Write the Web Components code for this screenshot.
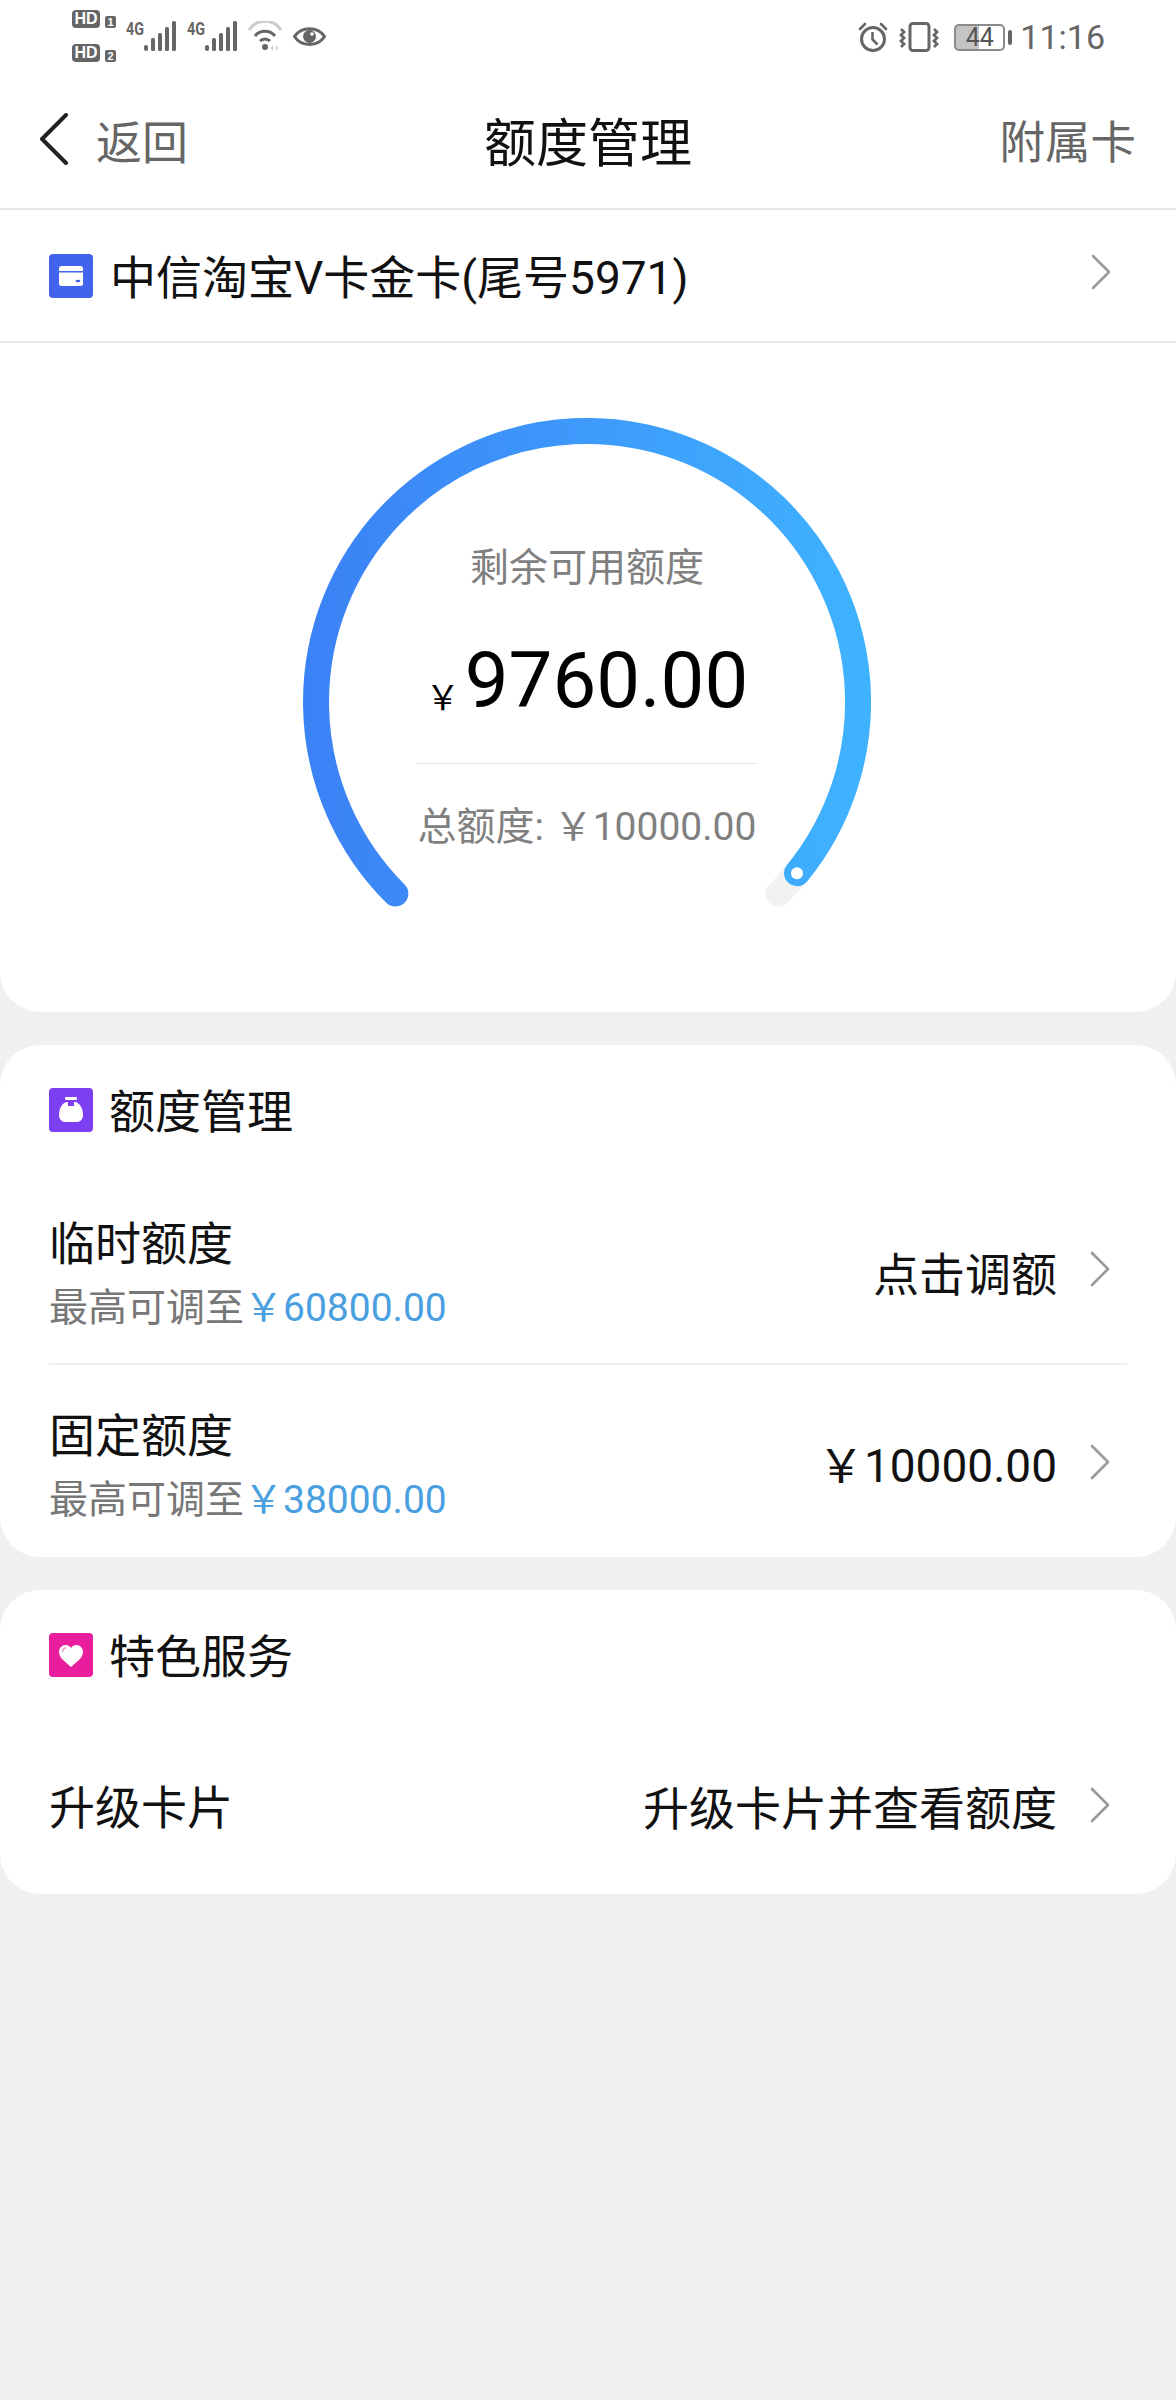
<!DOCTYPE html>
<html lang="zh">
<head>
<meta charset="utf-8">
<title>额度管理</title>
<style>
	html, body { margin: 0; background: #f0f0f0; }
	body { font-family: Roboto, "Noto Sans CJK SC", sans-serif; min-height: 2400px; }
</style>
</head>
<body>
	<status-bar></status-bar>
	<nav-bar back="返回" title="额度管理" action="附属卡"></nav-bar>
	<card-picker>中信淘宝V卡金卡(尾号5971)</card-picker>
	<quota-gauge></quota-gauge>

	<panel-card title="额度管理" style="margin-top:33px">
		<tile-icon slot="icon" kind="bag"></tile-icon>
		<panel-row name="临时额度" hint="最高可调至" limit="￥60800.00" divider>点击调额</panel-row>
		<panel-row name="固定额度" hint="最高可调至" limit="￥38000.00" lift>￥10000.00</panel-row>
	</panel-card>

	<panel-card title="特色服务" style="margin-top:33px">
		<tile-icon slot="icon" kind="heart"></tile-icon>
		<panel-row name="升级卡片" single>升级卡片并查看额度</panel-row>
	</panel-card>

<script>
class StatusBar extends HTMLElement {
	constructor() {
		super();
		this.attachShadow({ mode: 'open' })
		const bars = `<rect x="0" y="25" width="4" height="6" rx="2" fill="#666"/>
			<rect x="7" y="18" width="4" height="13" rx="1.500" fill="#666"/>
			<rect x="14" y="13" width="4" height="18" rx="1.500" fill="#666"/>
			<rect x="21" y="7" width="4" height="24" rx="1.500" fill="#666"/>
			<rect x="28" y="1" width="4" height="30" rx="1.500" fill="#666"/>`
		// viewBox starts above 0 so the 4G text box fits inside the svg
		const signal = `<svg class="sig" width="50" height="36" viewBox="-18 -4 50 36">
			<text x="-18" y="15" font-size="18" font-weight="700" font-family="Roboto" fill="#666" textLength="18" lengthAdjust="spacingAndGlyphs">4G</text>${bars}</svg>`
		this.shadowRoot.innerHTML = `
			<style>
			:host { display: flex; align-items: center; height: 72px; background: #fff; padding: 0 71px 0 72px; box-sizing: border-box; color: #666; }
			.hd { display: grid; grid-template-columns: 28px 11px; gap: 16px 5px; align-items: end; margin-right: 10px; }
			.hd b { display: block; height: 18px; border-radius: 4px; background: #666; color: #fff; font: 700 16px/18px "Liberation Sans", sans-serif; text-align: center; }
			.hd i { display: block; height: 12px; border-radius: 2px; background: #666; color: #fff; font: 700 11px/12px "Liberation Sans", sans-serif; text-align: center; }
			.sig { margin: -4px 11px 0 0; }
			.sp { flex: 1; }
			.bat { width: 51px; height: 27px; box-sizing: border-box; border: 2px solid #8a8a8a; border-radius: 5px; margin-left: 14px; margin-top: 2px;
				background: linear-gradient(90deg, #c4c4c4 49%, #fff 49%); color: #555; font: 400 25px/23px Roboto, sans-serif; text-align: center; }
			.nub { width: 4px; height: 15px; border-radius: 2px; background: #666; margin: 2px 8px 0 3px; }
			.time { font: 400 34px/40px Roboto, sans-serif; margin-top: 2px; }
			svg { display: block; flex: none; }
			</style>
			<div class="hd"><b>HD</b><i>1</i><b>HD</b><i>2</i></div>
			${signal}${signal}
			<svg width="36" height="30" viewBox="0 0 36 30" style="margin-left:-1px">
				<path d="M2 9a19 19 0 0 1 32 0" fill="none" stroke="#ccc" stroke-width="3"/>
				<path d="M8 15a13 13 0 0 1 20 0M13 20a7 7 0 0 1 10 0" fill="none" stroke="#666" stroke-width="3"/>
				<circle cx="18" cy="26" r="3" fill="#666"/>
				<path d="M26 24l-2.500 3 2.500 3zM29 24l2.500 3-2.500 3z" fill="#ccc"/>
			</svg>
			<svg width="33" height="25" viewBox="0 0 33 25" style="margin-left:10px">
				<path d="M1.500 12.500C8 2 25 2 31.500 12.500 25 23 8 23 1.500 12.500z" fill="none" stroke="#666" stroke-width="3"/>
				<circle cx="16.500" cy="12.500" r="6.500" fill="#666"/>
				<circle cx="19" cy="10" r="1.800" fill="#fff"/>
			</svg>
			<div class="sp"></div>
			<svg width="30" height="30" viewBox="0 0 30 30" style="margin-top:2px">
				<circle cx="15" cy="17" r="11.500" fill="none" stroke="#666" stroke-width="3"/>
				<path d="M14.500 10v7.500l5 5" fill="none" stroke="#666" stroke-width="2.600"/>
				<path d="M2 7l5-5M28 7l-5-5" stroke="#666" stroke-width="2.600" stroke-linecap="round"/>
			</svg>
			<svg width="41" height="30" viewBox="0 0 41 30" style="margin:2px 0 0 11px">
				<rect x="11" y="1.500" width="19" height="27" rx="3" fill="none" stroke="#666" stroke-width="3"/>
				<path d="M2 7l3 3-3 3 3 3-3 3 3 3-3 3M35 7l3 3-3 3 3 3-3 3 3 3-3 3" fill="none" stroke="#666" stroke-width="2.800"/>
			</svg>
			<div class="bat">44</div><div class="nub"></div>
			<div class="time">11:16</div>
		`;
	}
}
customElements.define('status-bar', StatusBar)

class NavBar extends HTMLElement {
	constructor() {
		super();
		this.attachShadow({ mode: 'open' })
		this.shadowRoot.innerHTML = `
			<style>
			:host { display: grid; grid-template-columns: 1fr auto 1fr; align-items: center; height: 138px; box-sizing: border-box; background: #fff; border-bottom: 2px solid #e6e6e6; padding: 0 40px 2px 40px; }
			.back { display: flex; align-items: center; color: #666; font-size: 46px; }
			.back svg { margin-right: 28px; display: block; }
			.title { font-size: 52px; color: #111; }
			.action { justify-self: end; font-size: 45.500px; color: #666; }
			</style>
			<div class="back">
				<svg width="28" height="52" viewBox="0 0 28 52"><path d="M26 2L2 26l24 24" fill="none" stroke="#222" stroke-width="4" stroke-linecap="round" stroke-linejoin="round"/></svg>
				<span>${this.getAttribute('back')}</span>
			</div>
			<div class="title">${this.getAttribute('title')}</div>
			<div class="action">${this.getAttribute('action')}</div>
		`;
	}
}
customElements.define('nav-bar', NavBar)

class ChevIcon extends HTMLElement {
	constructor() {
		super();
		this.attachShadow({ mode: 'open' })
		this.shadowRoot.innerHTML = `
			<style>:host { display: block; width: 20px; height: 36px; } svg { display: block; }</style>
			<svg width="20" height="36" viewBox="0 0 20 36"><path d="M2 2l16 16L2 34" fill="none" stroke="#999" stroke-width="2.600" stroke-linecap="round" stroke-linejoin="round"/></svg>
		`;
	}
}
customElements.define('chev-icon', ChevIcon)

class TileIcon extends HTMLElement {
	constructor() {
		super();
		this.attachShadow({ mode: 'open' })
		const kinds = {
			card: ['#4263eb', `<rect x="10" y="12" width="24" height="20" rx="2.500" fill="#fff"/><rect x="10" y="17" width="24" height="1.500" fill="#4263eb"/><ellipse cx="29" cy="27" rx="2.500" ry="1.300" fill="#4263eb"/>`],
			bag: ['#7c3ff2', `<rect x="16" y="9" width="12" height="3" rx="1.200" fill="#fff"/><path d="M17 14h10c5 2 7 8 7 13 0 4-2.500 7-6 7H16c-3.500 0-6-3-6-7 0-5 2-11 7-13z" fill="#fff"/><rect x="19" y="14" width="6" height="4" fill="#7c3ff2"/>`],
			heart: ['#e91e9c', `<path d="M22 34c-3-3.500-12-8-12-15 0-4 3-7 6.500-7 2.500 0 4.300 1 5.500 3 1.200-2 3-3 5.500-3 3.500 0 6.500 3 6.500 7 0 7-9 11.500-12 15z" fill="#fff"/><path d="M13.500 19c0-2.500 1.500-4 3.500-4" fill="none" stroke="#f39ad0" stroke-width="1.500"/>`]
		}
		const kind = kinds[this.getAttribute('kind')]
		this.shadowRoot.innerHTML = `
			<style>:host { display: block; width: 44px; height: 44px; flex: none; } svg { display: block; }</style>
			<svg width="44" height="44" viewBox="0 0 44 44"><rect width="44" height="44" rx="4" fill="${kind[0]}"/>${kind[1]}</svg>
		`;
	}
}
customElements.define('tile-icon', TileIcon)

class CardPicker extends HTMLElement {
	constructor() {
		super();
		this.attachShadow({ mode: 'open' })
		this.shadowRoot.innerHTML = `
			<style>
			:host { display: flex; align-items: center; height: 133px; box-sizing: border-box; background: #fff; border-bottom: 2px solid #e6e6e6; padding: 0 65px 0 49px; font-size: 46px; color: #111; }
			.txt { flex: 1; margin: -3px 0 0 17px; }
			chev-icon { margin-top: -8px; }
			</style>
			<tile-icon kind="card"></tile-icon>
			<div class="txt"><slot></slot></div>
			<chev-icon></chev-icon>
		`;
	}
}
customElements.define('card-picker', CardPicker)

class QuotaGauge extends HTMLElement {
	constructor() {
		super();
		this.attachShadow({ mode: 'open' })
		this.shadowRoot.innerHTML = `
			<style>
			:host { display: block; height: 669px; background: #fff; border-radius: 0 0 40px 40px; padding-top: 75px; box-sizing: border-box; }
			.dial { display: grid; width: 568px; height: 490px; margin-left: 303px; }
			.dial > * { grid-area: 1 / 1; }
			svg { display: block; }
			.info { display: flex; flex-direction: column; align-items: center; padding-top: 126px; text-align: center; }
			.label { font-size: 39px; line-height: 48px; color: #808080; }
			.amount { margin-top: 44px; font-size: 78px; line-height: 90px; color: #000; white-space: nowrap; }
			.amount small { font-size: 34px; line-height: 1; margin-right: 5px; vertical-align: -3px; }
			hr { width: 342px; height: 1px; margin: 37px 0 0; border: 0; background: #e8e8e8; }
			.total { margin-top: 40px; font-size: 39px; line-height: 46px; color: #808080; white-space: nowrap; }
			</style>
			<div class="dial">
				<svg width="568" height="490" viewBox="0 0 568 490">
					<defs><linearGradient id="arc" gradientUnits="userSpaceOnUse" x1="13" y1="0" x2="555" y2="0">
						<stop offset="0" stop-color="#3b82f6"/><stop offset="1" stop-color="#3fb2ff"/>
					</linearGradient></defs>
					<path d="M494 455.300A271 271 0 0 1 475.600 475.600" fill="none" stroke="#f2f2f2" stroke-width="26" stroke-linecap="round"/>
					<path d="M92.400 475.600A271 271 0 1 1 494 455.300" fill="none" stroke="url(#arc)" stroke-width="26" stroke-linecap="round"/>
					<circle cx="494" cy="455.300" r="6" fill="#fff"/>
				</svg>
				<div class="info">
					<div class="label">剩余可用额度</div>
					<div class="amount"><small>￥</small>9760.00</div>
					<hr>
					<div class="total">总额度: ￥10000.00</div>
				</div>
			</div>
		`;
	}
}
customElements.define('quota-gauge', QuotaGauge)

class PanelCard extends HTMLElement {
	constructor() {
		super();
		this.attachShadow({ mode: 'open' })
		this.shadowRoot.innerHTML = `
			<style>
			:host { display: block; background: #fff; border-radius: 40px; padding-top: 43px; }
			.head { display: flex; align-items: center; padding-left: 49px; font-size: 46px; line-height: 44px; color: #111; margin-bottom: 38px; }
			.head span { margin: 2px 0 -2px 16px; }
			</style>
			<div class="head"><slot name="icon"></slot><span>${this.getAttribute('title')}</span></div>
			<slot></slot>
		`;
	}
}
customElements.define('panel-card', PanelCard)

class PanelRow extends HTMLElement {
	constructor() {
		super();
		this.attachShadow({ mode: 'open' })
		const hint = this.getAttribute('hint')
		this.shadowRoot.innerHTML = `
			<style>
			:host { display: flex; align-items: center; margin: 0 49px 0 49px; padding: 39px 17px 25px 0; color: #111; }
			:host([divider]) { border-bottom: 2px solid #eee; padding: 42px 17px 23px 0; }
			:host([single]) { padding: 61px 17px 54px 0; }
			.left { flex: 1; }
			.name { font-size: 46px; line-height: 64px; }
			.sub { font-size: 39px; line-height: 64px; color: #777; white-space: nowrap; }
			.sub b { font-weight: 400; color: #4a9fe0; }
			.val { font-size: 46px; margin: -6px 33px 0 0; }
			chev-icon { margin-top: -6px; }
			:host([divider]) .val { margin-top: -10px; }
			:host([divider]) chev-icon { margin-top: -14px; }
			:host([lift]) .val { margin-top: -12px; }
			:host([lift]) chev-icon { margin-top: -12px; }
			</style>
			<div class="left">
				<div class="name">${this.getAttribute('name')}</div>
				${hint ? `<div class="sub">${hint}<b>${this.getAttribute('limit')}</b></div>` : ''}
			</div>
			<div class="val"><slot></slot></div>
			<chev-icon></chev-icon>
		`;
	}
}
customElements.define('panel-row', PanelRow)
</script>
</body>
</html>
